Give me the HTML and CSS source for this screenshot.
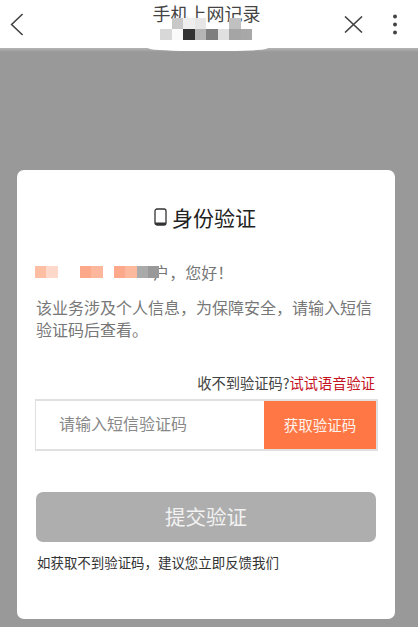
FILE: index.html
```html
<!DOCTYPE html>
<html lang="zh-CN">
<head>
<meta charset="utf-8">
<title>手机上网记录</title>
<link rel="stylesheet" href="styles.css">
</head>
<body>
<div class="page">
  <header class="topbar">
    <svg class="back" width="14" height="23" viewBox="0 0 14 23"><path d="M12.6 1 1.6 11.5l11 10.5" fill="none" stroke="#444" stroke-width="1.6"/></svg>
    <h1 class="page-title">手机上网记录</h1>
    <svg class="close" width="19" height="17" viewBox="0 0 19 17"><path d="M1 .5l17 16M18 .5l-17 16" fill="none" stroke="#444" stroke-width="1.6"/></svg>
    <svg class="more" width="6" height="21" viewBox="0 0 6 21"><circle cx="3" cy="2.5" r="2" fill="#444"/><circle cx="3" cy="10.5" r="2" fill="#444"/><circle cx="3" cy="18.5" r="2" fill="#444"/></svg>
    <div class="mosaic">
      <i></i><i class="m-c8"></i><i class="m-ee"></i><i class="m-e4"></i><i></i><i></i><i class="m-c0"></i><i></i>
      <i class="m-d8"></i><i class="m-fa"></i><i class="m-33"></i><i class="m-b5"></i><i class="m-7e"></i><i class="m-e0"></i><i class="m-a5"></i><i class="m-a8"></i>
    </div>
    <div class="bump"></div>
  </header>
  <main class="overlay">
    <section class="card">
      <h2 class="card-title">
        <svg class="phone" width="13" height="18" viewBox="0 0 13 18"><rect x="1" y="1" width="11" height="16" rx="2" fill="none" stroke="#333" stroke-width="1.3"/><path d="M1 14.6h11V15a2 2 0 0 1-2 2H3a2 2 0 0 1-2-2z" fill="#333"/></svg>
        <span>身份验证</span>
      </h2>
      <p class="greeting">
        <span class="masked">
          <i class="p1"></i><i class="p2"></i><i class="p3"></i><i class="p3"></i><i class="p4"></i><i class="p5"></i><i class="p3"></i><i class="p4"></i><i class="p6"></i><i class="g1"></i><i class="g2"></i>
        </span><span>户，您好！</span>
      </p>
      <p class="notice">该业务涉及个人信息，为保障安全，请输入短信验证码后查看。</p>
      <p class="voice">收不到验证码?<a class="voice-link">试试语音验证</a></p>
      <div class="code-row">
        <div class="code-input">请输入短信验证码</div>
        <div class="code-btn">获取验证码</div>
      </div>
      <div class="submit">提交验证</div>
      <p class="feedback">如获取不到验证码，建议您立即反馈我们</p>
    </section>
  </main>
</div>
</body>
</html>
```

FILE: styles.css
```css
* { box-sizing: border-box; }
html, body { margin: 0; padding: 0; background: #fff; }
body { font-family: "Noto Sans CJK SC", "Liberation Sans", sans-serif; width: 418px; height: 630px; overflow: hidden; }
.page { display: flex; flex-direction: column; height: 627px; }
.topbar { position: relative; height: 48px; flex: none; background: #fff; display: flex; align-items: center; padding: 0 20px 0 10px; }
.back { margin-top: 1px; }
.page-title { position: absolute; left: 0; right: 5px; top: 2px; margin: 0; text-align: center; font-size: 18px; line-height: 22px; font-weight: 400; color: #444; }
.close { margin-left: auto; }
.more { margin-left: 29px; }
.mosaic { position: absolute; left: 160px; top: 18px; width: 92px; height: 22px; display: grid; grid-template-columns: repeat(8, 11.5px); grid-template-rows: 11px 11px; }
.m-c8 { background: #c8c8c8; } .m-ee { background: #eee; } .m-e4 { background: #e6e6e6; } .m-c0 { background: #c0c0c0; }
.m-d8 { background: #d8d8d8; } .m-fa { background: #fafafa; } .m-33 { background: #333; } .m-b5 { background: #b5b5b5; }
.m-7e { background: #7e7e7e; } .m-e0 { background: #e0e0e0; } .m-a5 { background: #a5a5a5; } .m-a8 { background: #a8a8a8; }
.bump { position: absolute; left: 148px; top: 48px; width: 120px; height: 3px; background: #fff; border-radius: 0 0 40px 40px / 0 0 3px 3px; }
.overlay { flex: 1; background: linear-gradient(#b5b5b5, #999 4px); padding: 122px 23px 8px 17px; }
.card { height: 449px; background: #fff; border-radius: 7px; padding: 31px 19px 0 19px; }
.card-title { margin: 0; display: flex; justify-content: center; align-items: center; gap: 5px; font-size: 21px; line-height: 32px; font-weight: 400; color: #222; padding-right: 2px; }
.greeting { margin: 27px 0 0; display: flex; align-items: center; height: 24px; font-size: 16px; line-height: 24px; color: #777; }
.masked { position: relative; z-index: 1; display: grid; grid-template-columns: repeat(11, 11.3px); height: 12px; margin-left: -1px; margin-right: -6px; }
.p1 { background: #fdbfa3; } .p2 { background: #fed8ca; } .p3 { background: #fff; } .p4 { background: #fba98a; } .p5 { background: #fcb79c; } .p6 { background: #fdb99c; }
.g1 { background: #aaa; } .g2 { background: #999; }
.notice { margin: 12px 0 0; font-size: 16px; line-height: 22px; color: #777; }
.voice { margin: 32px 1px 0 0; text-align: right; font-size: 14.25px; line-height: 22px; color: #444; }
.voice-link { color: #c5121f; }
.code-row { margin: 5px -2px 0 -1px; height: 52px; display: flex; border: 2px solid #e0e0e0; border-left-width: 1px; }
.code-input { flex: 1; padding-left: 23px; font-size: 16px; line-height: 45px; color: #888; }
.code-btn { width: 112px; background: #ff7744; color: #fdf3ee; text-align: center; font-size: 14.5px; line-height: 47px; }
.submit { margin: 41px 0 0 0; height: 50px; border-radius: 7px; background: #aeaeae; color: #f2f2f2; text-align: center; font-size: 20.5px; line-height: 49px; }
.feedback { margin: 10px 0 0 1px; font-size: 13.45px; line-height: 20px; color: #333; }
```
